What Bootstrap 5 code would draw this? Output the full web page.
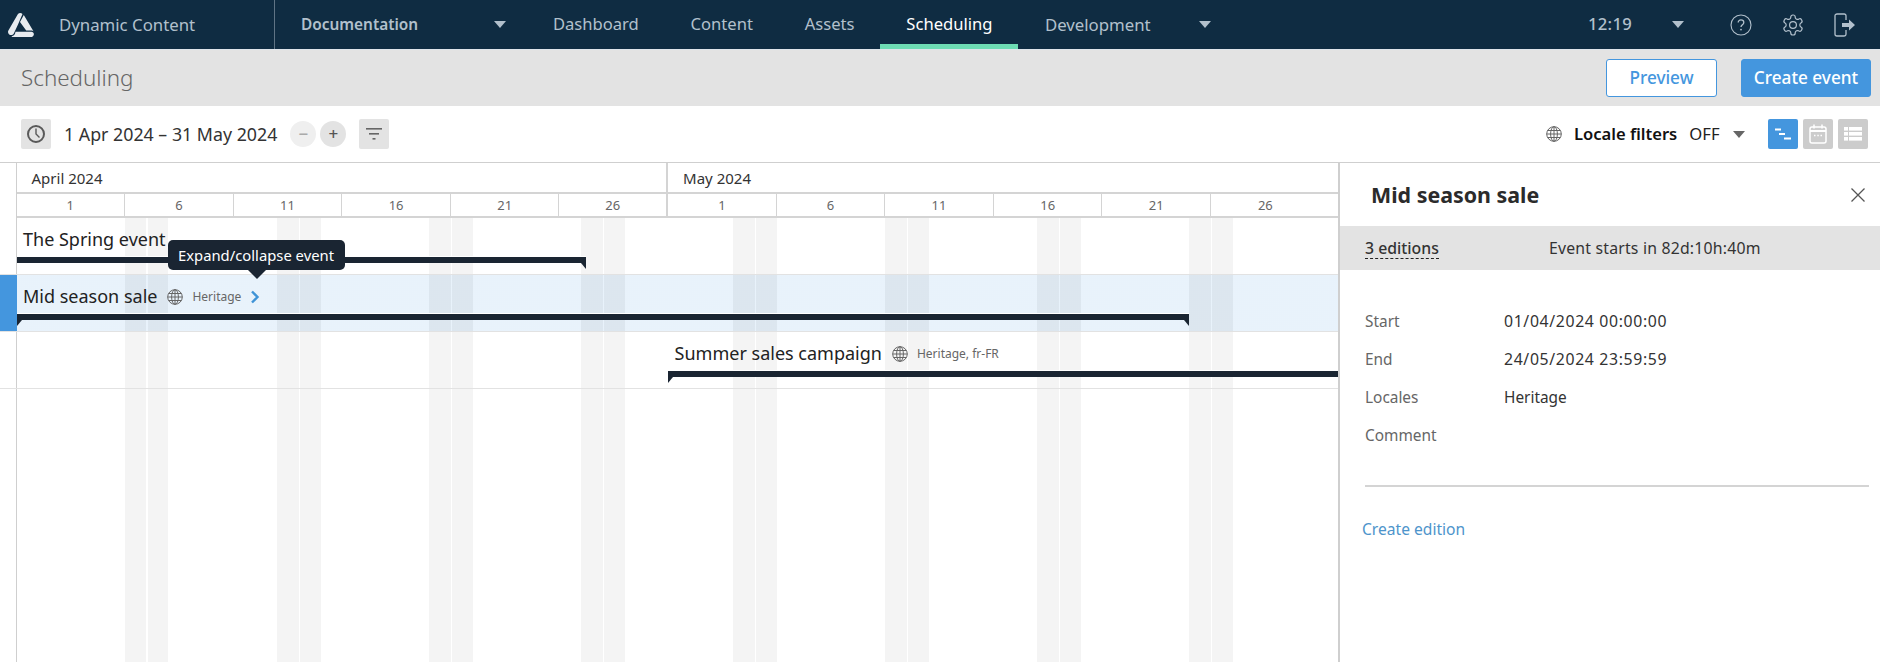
<!DOCTYPE html>
<html lang="en">
<head>
<meta charset="utf-8">
<title>Scheduling</title>
<link href="https://cdn.jsdelivr.net/npm/bootstrap@5.3.0/dist/css/bootstrap.min.css" rel="stylesheet">
<style>
:root{--line:#d4d4d4;--blue:#4496de;--navy:#0f2c42;--navtext:#b2c0cc;--stripe:#f4f4f4;--ink:#1a2532}
html,body{height:662px;overflow:hidden}
body{font-family:"Noto Sans",sans-serif;font-size:16px;color:#333;background:#fff}
.app-nav{height:50px;background:var(--navy);border-bottom:1px solid #dfe5ea;padding:0;flex-wrap:nowrap;align-items:stretch}
.brand-cell{width:275px;border-right:1px solid #5f7485;gap:25px;padding-left:8px}
.brand-name{font-size:16.8px;color:var(--navtext)}
.doc-cell{width:252px;padding:0 21px 0 26px;color:var(--navtext);font-size:15.4px;font-weight:600}
.tri{display:inline-block;width:0;height:0;border-left:6.5px solid transparent;border-right:6.5px solid transparent;border-top:7px solid var(--navtext)}
.app-link{color:var(--navtext);font-size:16.6px;padding:0 25.9px;height:49px;display:flex;align-items:center;text-decoration:none}
.app-link.dev-link{padding-left:26.5px;font-size:16.8px}
.app-link.on{color:#fff;border-bottom:5px solid #6ddcb4;padding-top:5px}
.more-tri{margin-left:22px}
.clock-time{color:var(--navtext);font-size:16.6px;font-weight:500;letter-spacing:.3px;width:84px}
.clock-tri{margin-right:31px}
.top-ico{width:52px;display:flex;justify-content:center;color:var(--navtext)}
.right-nav{padding-right:9px}
.sub-head{height:56px;background:#e3e3e3;padding:0 9px 0 21px}
.page-name{font-size:22.4px;font-weight:300;color:#666;margin:0}
.act-btn{height:38px;font-size:17.2px;font-weight:500;border-radius:3px;padding:0;border:1px solid var(--blue)}
.act-ghost{width:111px;background:#fff;color:var(--blue);margin-right:24px}
.act-solid{width:130px;background:var(--blue);color:#fff}
.tool-bar{height:56px;padding:0 12px 0 21px;border-bottom:1px solid #cfcfcf;box-sizing:content-box}
.sq-btn{width:30px;height:30px;padding:0;border:0;border-radius:2px;background:#e3e3e3;display:flex;align-items:center;justify-content:center}
.sq-btn.live{background:var(--blue)}
.sq-btn.dim{background:#ccc}
.range-text{font-size:17.8px;color:#333;margin:0 13px 0 13px;white-space:nowrap}
.zoom-dot{width:26px;height:26px;border-radius:50%;border:0;padding:0;background:#e3e3e3;color:#555;font-size:17px;line-height:24px;font-weight:500}
.zoom-dot.off{background:#efefef;color:#aaa;margin-right:4px}
.filter-btn{margin-left:13px}
.loc-label{font-size:16.6px;font-weight:600;color:#111;margin:0 12px 0 12px}
.loc-val{font-size:16.6px;color:#222;margin-right:13px}
.tri-dark{border-top-color:#666;margin-right:23.5px}
.view-set{gap:5px}
.work{height:499px}
.gantt{width:1338px;flex:none;overflow:hidden}
.gutter{width:16.5px;flex:none;border-right:1px solid #cfcfcf}
.gutter.sel{background:var(--blue);border-right-color:var(--blue)}
.head-row{height:55px}
.month-row{height:31px;border-bottom:2px solid var(--line)}
.month-cell{font-size:15px;color:#333;padding-left:15px;line-height:30px;white-space:nowrap;overflow:hidden}
.month-a{width:651.6px;border-right:2px solid var(--line)}
.days-row{height:24px;border-bottom:2px solid var(--line)}
.day-cell{width:108.6px;flex:none;text-align:center;font-size:13px;line-height:22px;color:#666;border-right:1px solid var(--line)}
.day-cell.apr-end{border-right-width:2px}
.day-cell.tail{border-right:0}
.track{height:57px;border-bottom:1px solid #e2e2e2}
.lane{flex:1;position:relative;padding-top:4px;
  background-image:repeating-linear-gradient(90deg,transparent 0,transparent 108px,var(--stripe) 108px,var(--stripe) 129.500px,#fff 129.500px,#fff 130.500px,var(--stripe) 130.500px,var(--stripe) 151.500px,transparent 151.500px,transparent 152.040px)}
.track.sel .lane{background-image:linear-gradient(rgba(68,150,222,.12),rgba(68,150,222,.12)),repeating-linear-gradient(90deg,transparent 0,transparent 108px,#f1f1f1 108px,#f1f1f1 129.500px,#fff 129.500px,#fff 130.500px,#f1f1f1 130.500px,#f1f1f1 151.500px,transparent 151.500px,transparent 152.040px)}
.lane-fill{height:300px}
.ev-head{height:35px;padding-left:6.5px;gap:9px;white-space:nowrap}
.ev-name{font-size:18px;color:#222}
.ev-glob{margin-left:1px}
.ev-loc{font-size:12px;color:#666}
.ev-arrow{margin-left:-.5px}
.ev-bar{height:6px;background:var(--ink);position:relative;box-shadow:0 -1px 0 #fff}
.ev-bar.tick-r::after,.ev-bar.tick-l::before{content:"";position:absolute;top:6px;width:0;height:0;border-top:6px solid var(--ink)}
.ev-bar.tick-r::after{right:0;border-left:5px solid transparent}
.ev-bar.tick-l::before{left:0;border-right:5px solid transparent}
.evt-tip{position:absolute;left:151px;top:-35px;width:177px;height:30px;background:var(--ink);color:#fff;font-size:14.8px;border-radius:5px;z-index:5;display:flex;align-items:center;justify-content:center;white-space:nowrap}
.evt-tip::after{content:"";position:absolute;left:80px;top:30px;border-left:9px solid transparent;border-right:9px solid transparent;border-top:9px solid var(--ink)}
.side{flex:1;border-left:2px solid #cfcfcf}
.side-title{height:63px;padding:0 14px 0 31px}
.side-title h2{font-size:21.4px;font-weight:700;color:#2b2b2b;margin:0}
.shut{background:none;border:0;padding:0;line-height:0}
.side-strip{height:44px;background:#e3e3e3;padding:1px 0 0 25px;font-size:15.4px;color:#333}
.ed-count{width:184px;font-weight:500;font-size:15.8px}
.ed-count span{border-bottom:1px dashed #222;line-height:19px;display:inline-block}
.ev-clock{font-size:15.8px;letter-spacing:.2px}
.facts{padding:33px 11px 0 25px}
.fact{height:38px;font-size:15.4px}
.fact dt{width:139px;font-weight:400;color:#666;margin:0}
.fact dd{margin:0;color:#333}
.fact dd.stamp{font-size:15.8px;letter-spacing:.65px}
.facts hr{margin:30px 0 30px;border:0;border-top:2px solid #d4d4d4;opacity:1}
.new-ed{font-size:15.6px;color:#4d94cb;text-decoration:none;margin-left:-3px}
</style>
</head>
<body>

<nav class="navbar navbar-expand app-nav">
  <div class="brand-cell d-flex align-items-center">
    <svg width="26" height="24" viewBox="0 0 26 24" fill="#e7ebef" aria-hidden="true">
      <path d="M9.800 1.200C11-.2 13.200-.2 14.500 1L10 11.500 5.800 20.500C4.800 22.300 2.600 22.600 1.200 21.400-.1 20.300-.3 18.800.4 17.500z"/>
      <path d="M15.800 2 25.600 18.600C25 17.900 24 17.600 23 17.600H18.200L12 9z"/>
      <path d="M7.500 18.800H23.300C25 18.800 26.200 20.200 25.800 21.700 25.400 23.200 24.200 24 23 24H5.200C4.500 24 3.800 23.800 3.400 23.400 5 23.200 6.300 22.200 7 20.800z"/>
    </svg>
    <span class="brand-name">Dynamic Content</span>
  </div>
  <div class="doc-cell d-flex align-items-center justify-content-between">
    <span>Documentation</span><i class="tri"></i>
  </div>
  <div class="navbar-nav flex-row align-items-center">
    <a class="app-link" href="#">Dashboard</a>
    <a class="app-link" href="#">Content</a>
    <a class="app-link" href="#">Assets</a>
    <a class="app-link on" href="#">Scheduling</a>
    <a class="app-link dev-link" href="#">Development</a>
    <i class="tri more-tri"></i>
  </div>
  <div class="right-nav ms-auto d-flex align-items-center">
    <span class="clock-time">12:19</span>
    <i class="tri clock-tri"></i>
    <span class="top-ico">
      <svg width="22" height="22" viewBox="0 0 22 22" fill="none" stroke="currentColor" stroke-width="1.100" aria-hidden="true"><circle cx="11" cy="11" r="10"/><path d="M8.200 8.600c0-1.600 1.200-2.700 2.800-2.700s2.800 1 2.800 2.500c0 2.300-2.800 2.300-2.800 4.500" stroke-width="1.300"/><circle cx="11" cy="15.600" r=".9" fill="currentColor" stroke="none"/></svg>
    </span>
    <span class="top-ico">
      <svg width="24" height="24" viewBox="0 0 24 24" fill="none" stroke="currentColor" stroke-width="1.200" aria-hidden="true"><path d="M12.220 2h-.44a2 2 0 0 0-2 2v.18a2 2 0 0 1-1 1.730l-.43.25a2 2 0 0 1-2 0l-.15-.08a2 2 0 0 0-2.730.73l-.22.38a2 2 0 0 0 .73 2.730l.15.1a2 2 0 0 1 1 1.720v.51a2 2 0 0 1-1 1.740l-.15.09a2 2 0 0 0-.73 2.730l.22.38a2 2 0 0 0 2.730.73l.15-.08a2 2 0 0 1 2 0l.43.25a2 2 0 0 1 1 1.730V20a2 2 0 0 0 2 2h.44a2 2 0 0 0 2-2v-.18a2 2 0 0 1 1-1.730l.43-.25a2 2 0 0 1 2 0l.15.08a2 2 0 0 0 2.730-.73l.22-.39a2 2 0 0 0-.73-2.730l-.15-.08a2 2 0 0 1-1-1.740v-.5a2 2 0 0 1 1-1.740l.15-.09a2 2 0 0 0 .73-2.730l-.22-.38a2 2 0 0 0-2.730-.73l-.15.08a2 2 0 0 1-2 0l-.43-.25a2 2 0 0 1-1-1.730V4a2 2 0 0 0-2-2z"/><circle cx="12" cy="12" r="3.400"/></svg>
    </span>
    <span class="top-ico">
      <svg width="22" height="24" viewBox="0 0 22 24" fill="none" stroke="currentColor" stroke-width="1.300" aria-hidden="true"><path d="M12 7V2.800C12 1.800 11.200 1 10.200 1H3C2 1 1 1.800 1 2.800v18.400C1 22.200 2 23 3 23h7.200c1 0 1.800-.8 1.800-1.800V17"/><path d="M8 10h7V6.500l6 5.500-6 5.500V14H8z" fill="currentColor" stroke="none"/></svg>
    </span>
  </div>
</nav>

<header class="sub-head d-flex align-items-center justify-content-between">
  <h1 class="page-name">Scheduling</h1>
  <div class="d-flex">
    <button class="btn act-btn act-ghost" type="button">Preview</button>
    <button class="btn act-btn act-solid" type="button">Create event</button>
  </div>
</header>

<div class="tool-bar d-flex align-items-center justify-content-between">
  <div class="d-flex align-items-center">
    <button class="sq-btn" type="button" aria-label="Clock">
      <svg width="20" height="20" viewBox="0 0 20 20" fill="none" stroke="#595959" stroke-width="2" aria-hidden="true"><circle cx="10" cy="10" r="8"/><path d="M10 4.500V10l3.500 3.500" stroke-width="1.400"/></svg>
    </button>
    <span class="range-text">1 Apr 2024 – 31 May 2024</span>
    <button class="zoom-dot off" type="button">−</button>
    <button class="zoom-dot" type="button">+</button>
    <button class="sq-btn filter-btn" type="button" aria-label="Filter">
      <svg width="16" height="14" viewBox="0 0 16 14" fill="#666" aria-hidden="true"><rect x="0" y="1" width="16" height="1.600"/><rect x="3" y="6" width="10" height="1.600"/><rect x="6.500" y="11" width="3" height="1.600"/></svg>
    </button>
  </div>
  <div class="d-flex align-items-center">
    <svg width="16" height="16" viewBox="0 0 16 16" fill="none" stroke="#666" stroke-width="1" aria-hidden="true"><circle cx="8" cy="8" r="7.300"/><ellipse cx="8" cy="8" rx="3.400" ry="7.300"/><path d="M8 .7v14.600M.7 8h14.600M1.700 4.500h12.600M1.700 11.500h12.600"/></svg>
    <span class="loc-label">Locale filters</span>
    <span class="loc-val">OFF</span>
    <i class="tri tri-dark"></i>
    <div class="d-flex view-set">
      <button class="sq-btn live" type="button" aria-label="Timeline">
        <svg width="16" height="14" viewBox="0 0 16 14" fill="#fff" aria-hidden="true"><rect x="0" y="1.500" width="6" height="2"/><rect x="4" y="6" width="6" height="2"/><rect x="9" y="10.500" width="7" height="2"/></svg>
      </button>
      <button class="sq-btn dim" type="button" aria-label="Calendar">
        <svg width="18" height="20" viewBox="0 0 18 20" fill="none" stroke="#fff" stroke-width="1.500" aria-hidden="true"><rect x="1" y="3" width="16" height="16" rx="2"/><path d="M1 7h16" stroke-width="2"/><path d="M5 .5v4M13 .5v4"/><path d="M5 11.500h1.500M8.300 11.500h1.500M11.500 11.500H13" stroke-width="1.600"/></svg>
      </button>
      <button class="sq-btn dim" type="button" aria-label="List">
        <svg width="18" height="16" viewBox="0 0 18 16" fill="#fff" aria-hidden="true"><rect y="1" width="4" height="3.600"/><rect x="5" y="1" width="13" height="3.600"/><rect y="6" width="4" height="3.600"/><rect x="5" y="6" width="13" height="3.600"/><rect y="11" width="4" height="3.600"/><rect x="5" y="11" width="13" height="3.600"/></svg>
      </button>
    </div>
  </div>
</div>

<main class="work d-flex">
  <section class="gantt">
    <div class="head-row d-flex">
      <div class="gutter"></div>
      <div class="flex-grow-1">
        <div class="month-row d-flex">
          <div class="month-cell month-a">April 2024</div>
          <div class="month-cell flex-grow-1">May 2024</div>
        </div>
        <div class="days-row d-flex">
          <div class="day-cell">1</div><div class="day-cell">6</div><div class="day-cell">11</div><div class="day-cell">16</div><div class="day-cell">21</div><div class="day-cell apr-end">26</div>
          <div class="day-cell">1</div><div class="day-cell">6</div><div class="day-cell">11</div><div class="day-cell">16</div><div class="day-cell">21</div><div class="day-cell tail">26</div>
        </div>
      </div>
    </div>

    <div class="track d-flex">
      <div class="gutter"></div>
      <div class="lane">
        <div class="ev-head d-flex align-items-center"><span class="ev-name">The Spring event</span></div>
        <div class="ev-bar tick-r" style="width:569px"></div>
      </div>
    </div>

    <div class="track sel d-flex">
      <div class="gutter sel"></div>
      <div class="lane">
        <div class="evt-tip">Expand/collapse event</div>
        <div class="ev-head d-flex align-items-center">
          <span class="ev-name">Mid season sale</span>
          <svg class="ev-glob" width="16" height="16" viewBox="0 0 16 16" fill="none" stroke="#666" stroke-width="1" aria-hidden="true"><circle cx="8" cy="8" r="7.300"/><ellipse cx="8" cy="8" rx="3.400" ry="7.300"/><path d="M8 .7v14.600M.7 8h14.600M1.700 4.500h12.600M1.700 11.500h12.600"/></svg>
          <span class="ev-loc">Heritage</span>
          <svg class="ev-arrow" width="10" height="14" viewBox="0 0 10 14" fill="none" stroke="#3f93d6" stroke-width="2.400" aria-hidden="true"><path d="M2 1.500 7.500 7 2 12.500"/></svg>
        </div>
        <div class="ev-bar tick-l tick-r" style="width:1172.500px"></div>
      </div>
    </div>

    <div class="track d-flex">
      <div class="gutter"></div>
      <div class="lane">
        <div class="ev-head d-flex align-items-center" style="margin-left:651.600px">
          <span class="ev-name">Summer sales campaign</span>
          <svg class="ev-glob" width="16" height="16" viewBox="0 0 16 16" fill="none" stroke="#666" stroke-width="1" aria-hidden="true"><circle cx="8" cy="8" r="7.300"/><ellipse cx="8" cy="8" rx="3.400" ry="7.300"/><path d="M8 .7v14.600M.7 8h14.600M1.700 4.500h12.600M1.700 11.500h12.600"/></svg>
          <span class="ev-loc">Heritage, fr-FR</span>
        </div>
        <div class="ev-bar tick-l" style="margin-left:651.600px"></div>
      </div>
    </div>

    <div class="d-flex">
      <div class="gutter"></div>
      <div class="lane lane-fill"></div>
    </div>
  </section>

  <aside class="side">
    <div class="side-title d-flex align-items-center justify-content-between">
      <h2>Mid season sale</h2>
      <button class="shut" type="button" aria-label="Close">
        <svg width="16" height="16" viewBox="0 0 16 16" fill="none" stroke="#555" stroke-width="1.300" aria-hidden="true"><path d="M1.500 1.500 14.500 14.500M14.500 1.500 1.500 14.500"/></svg>
      </button>
    </div>
    <div class="side-strip d-flex align-items-center">
      <div class="ed-count"><span>3 editions</span></div>
      <div class="ev-clock">Event starts in 82d:10h:40m</div>
    </div>
    <div class="facts">
      <dl class="m-0">
        <div class="fact d-flex align-items-center"><dt>Start</dt><dd class="stamp">01/04/2024 00:00:00</dd></div>
        <div class="fact d-flex align-items-center"><dt>End</dt><dd class="stamp">24/05/2024 23:59:59</dd></div>
        <div class="fact d-flex align-items-center"><dt>Locales</dt><dd>Heritage</dd></div>
        <div class="fact d-flex align-items-center"><dt>Comment</dt><dd></dd></div>
      </dl>
      <hr>
      <a class="new-ed" href="#">Create edition</a>
    </div>
  </aside>
</main>

<script src="https://cdn.jsdelivr.net/npm/bootstrap@5.3.0/dist/js/bootstrap.bundle.min.js"></script>
</body>
</html>
